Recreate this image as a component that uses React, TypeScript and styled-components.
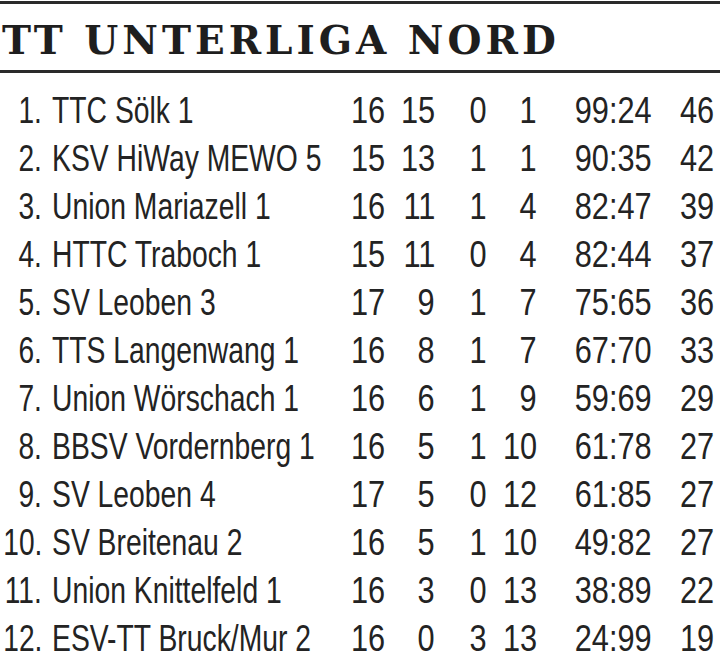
import * as React from 'react';
import styled, { createGlobalStyle } from 'styled-components';

const GlobalStyle = createGlobalStyle`
  html, body {
    margin: 0;
    padding: 0;
    background: #fff;
  }
`;

interface Team {
    rank: number;
    name: string;
    games: number;
    wins: number;
    draws: number;
    losses: number;
    goals: string;
    points: number;
}

const teams: Array<Team> = [
    { rank: 1, name: 'TTC Sölk 1', games: 16, wins: 15, draws: 0, losses: 1, goals: '99:24', points: 46 },
    { rank: 2, name: 'KSV HiWay MEWO 5', games: 15, wins: 13, draws: 1, losses: 1, goals: '90:35', points: 42 },
    { rank: 3, name: 'Union Mariazell 1', games: 16, wins: 11, draws: 1, losses: 4, goals: '82:47', points: 39 },
    { rank: 4, name: 'HTTC Traboch 1', games: 15, wins: 11, draws: 0, losses: 4, goals: '82:44', points: 37 },
    { rank: 5, name: 'SV Leoben 3', games: 17, wins: 9, draws: 1, losses: 7, goals: '75:65', points: 36 },
    { rank: 6, name: 'TTS Langenwang 1', games: 16, wins: 8, draws: 1, losses: 7, goals: '67:70', points: 33 },
    { rank: 7, name: 'Union Wörschach 1', games: 16, wins: 6, draws: 1, losses: 9, goals: '59:69', points: 29 },
    { rank: 8, name: 'BBSV Vordernberg 1', games: 16, wins: 5, draws: 1, losses: 10, goals: '61:78', points: 27 },
    { rank: 9, name: 'SV Leoben 4', games: 17, wins: 5, draws: 0, losses: 12, goals: '61:85', points: 27 },
    { rank: 10, name: 'SV Breitenau 2', games: 16, wins: 5, draws: 1, losses: 10, goals: '49:82', points: 27 },
    { rank: 11, name: 'Union Knittelfeld 1', games: 16, wins: 3, draws: 0, losses: 13, goals: '38:89', points: 22 },
    { rank: 12, name: 'ESV-TT Bruck/Mur 2', games: 16, wins: 0, draws: 3, losses: 13, goals: '24:99', points: 19 },
];

export default function App() {
    return <Page>
        <GlobalStyle />
        <Header>
            <Title>TT UNTERLIGA NORD</Title>
        </Header>
        <Table>
            {teams.map(t => (
                <Row key={t.rank}>
                    <Cell><Squeeze $scale={0.76} $origin="right">{t.rank}.</Squeeze></Cell>
                    <NameCell><Squeeze $scale={0.765} $origin="left">{t.name}</Squeeze></NameCell>
                    <Cell><Squeeze>{t.games}</Squeeze></Cell>
                    <Cell><Squeeze>{t.wins}</Squeeze></Cell>
                    <Cell><Squeeze>{t.draws}</Squeeze></Cell>
                    <Cell><Squeeze>{t.losses}</Squeeze></Cell>
                    <Cell><Squeeze>{t.goals}</Squeeze></Cell>
                    <Cell><Squeeze>{t.points}</Squeeze></Cell>
                </Row>
            ))}
        </Table>
    </Page>;
}

//Style Components
const Page = styled.div`
  width: 720px;
  height: 657px;
  overflow: hidden;
  background: #fff;
  color: #222;
`;

const Header = styled.div`
  margin-top: 1px;
  border-top: 3px solid #2a2a2a;
  border-bottom: 3px solid #2a2a2a;
  height: 66px;
  display: flex;
  align-items: center;
`;

const Title = styled.h1`
  margin: 7px 0 0 2px;
  font-family: "DejaVu Serif", "Liberation Serif", serif;
  font-weight: bold;
  font-size: 39px;
  letter-spacing: 4px;
  line-height: 1;
  color: #1e1e1e;
`;

const Table = styled.div`
  padding-top: 14px;
  display: flex;
  flex-direction: column;
`;

// narrow condensed newspaper type: Liberation Sans squeezed horizontally
const Row = styled.div`
  display: grid;
  grid-template-columns: 42px 303px 40px 50px 52px 50px 115px 62px;
  height: 48px;
  line-height: 48px;
  font-family: "Liberation Sans", Arial, sans-serif;
  font-size: 37px;
  color: #232323;
  white-space: nowrap;
`;

const Cell = styled.div`
  display: flex;
  justify-content: flex-end;
`;

const NameCell = styled.div`
  display: flex;
  justify-content: flex-start;
  padding-left: 10px;
`;

const Squeeze = styled.span<{ $scale?: number; $origin?: string }>`
  display: inline-block;
  flex: none;
  transform: scaleX(${p => p.$scale ?? 0.83});
  transform-origin: ${p => p.$origin ?? 'right'} center;
`;
